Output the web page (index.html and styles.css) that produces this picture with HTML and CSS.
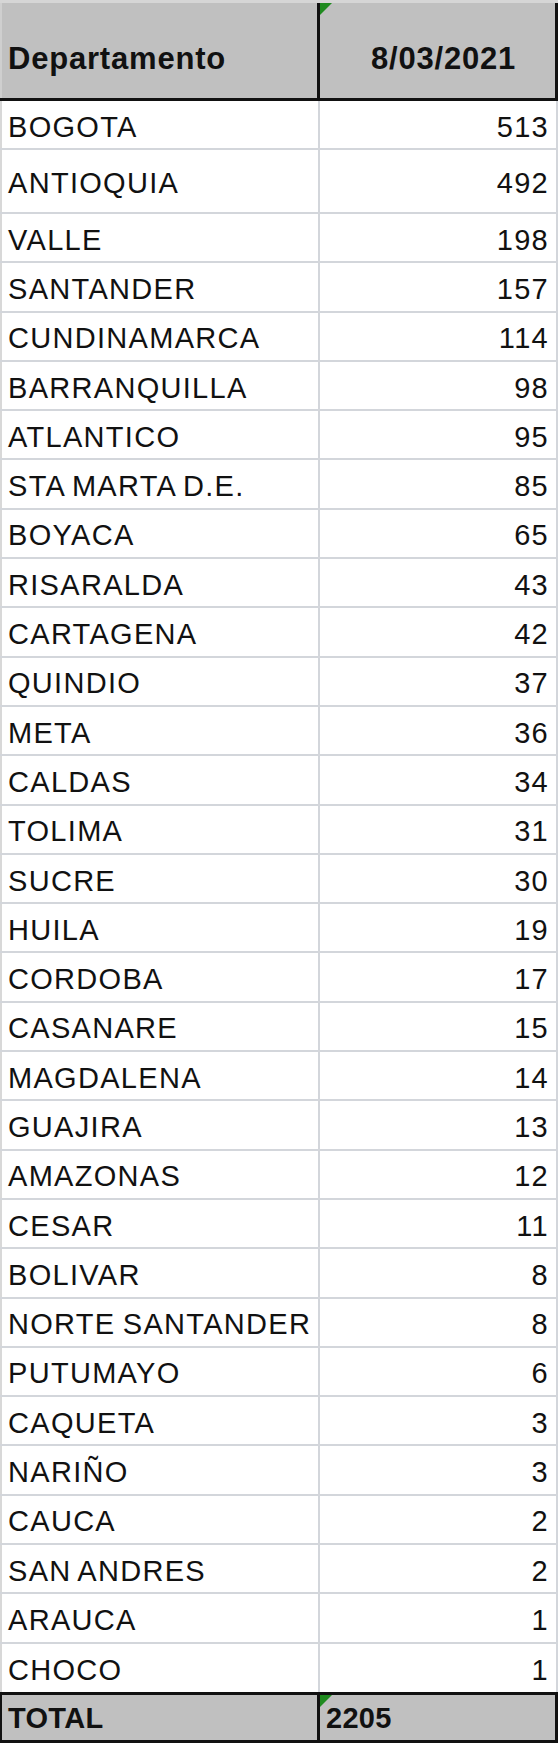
FILE: index.html
```html
<!DOCTYPE html>
<html lang="es">
<head>
<meta charset="utf-8">
<title>Departamento 8/03/2021</title>
<link rel="stylesheet" href="styles.css">
</head>
<body>
<div class="sheet">
  <div class="row head"><div class="cell name">Departamento</div><div class="cell date flag">8/03/2021</div></div>
  <div class="row first"><div class="cell name">BOGOTA</div><div class="cell num">513</div></div>
  <div class="row tall"><div class="cell name">ANTIOQUIA</div><div class="cell num">492</div></div>
  <div class="row"><div class="cell name">VALLE</div><div class="cell num">198</div></div>
  <div class="row"><div class="cell name">SANTANDER</div><div class="cell num">157</div></div>
  <div class="row"><div class="cell name">CUNDINAMARCA</div><div class="cell num">114</div></div>
  <div class="row"><div class="cell name">BARRANQUILLA</div><div class="cell num">98</div></div>
  <div class="row"><div class="cell name">ATLANTICO</div><div class="cell num">95</div></div>
  <div class="row"><div class="cell name">STA MARTA D.E.</div><div class="cell num">85</div></div>
  <div class="row"><div class="cell name">BOYACA</div><div class="cell num">65</div></div>
  <div class="row"><div class="cell name">RISARALDA</div><div class="cell num">43</div></div>
  <div class="row"><div class="cell name">CARTAGENA</div><div class="cell num">42</div></div>
  <div class="row"><div class="cell name">QUINDIO</div><div class="cell num">37</div></div>
  <div class="row"><div class="cell name">META</div><div class="cell num">36</div></div>
  <div class="row"><div class="cell name">CALDAS</div><div class="cell num">34</div></div>
  <div class="row"><div class="cell name">TOLIMA</div><div class="cell num">31</div></div>
  <div class="row"><div class="cell name">SUCRE</div><div class="cell num">30</div></div>
  <div class="row"><div class="cell name">HUILA</div><div class="cell num">19</div></div>
  <div class="row"><div class="cell name">CORDOBA</div><div class="cell num">17</div></div>
  <div class="row"><div class="cell name">CASANARE</div><div class="cell num">15</div></div>
  <div class="row"><div class="cell name">MAGDALENA</div><div class="cell num">14</div></div>
  <div class="row"><div class="cell name">GUAJIRA</div><div class="cell num">13</div></div>
  <div class="row"><div class="cell name">AMAZONAS</div><div class="cell num">12</div></div>
  <div class="row"><div class="cell name">CESAR</div><div class="cell num">11</div></div>
  <div class="row"><div class="cell name">BOLIVAR</div><div class="cell num">8</div></div>
  <div class="row"><div class="cell name">NORTE SANTANDER</div><div class="cell num">8</div></div>
  <div class="row"><div class="cell name">PUTUMAYO</div><div class="cell num">6</div></div>
  <div class="row"><div class="cell name">CAQUETA</div><div class="cell num">3</div></div>
  <div class="row"><div class="cell name">NARIÑO</div><div class="cell num">3</div></div>
  <div class="row"><div class="cell name">CAUCA</div><div class="cell num">2</div></div>
  <div class="row"><div class="cell name">SAN ANDRES</div><div class="cell num">2</div></div>
  <div class="row"><div class="cell name">ARAUCA</div><div class="cell num">1</div></div>
  <div class="row last"><div class="cell name">CHOCO</div><div class="cell num">1</div></div>
  <div class="row total"><div class="cell name">TOTAL</div><div class="cell sum flag">2205</div></div>
</div>
</body>
</html>
```

FILE: styles.css
```css
html, body {
  margin: 0;
  padding: 0;
  background: #ffffff;
}

.sheet {
  width: 558px;
  font-family: "Liberation Sans", Arial, sans-serif;
  color: #111111;
}

.row {
  display: grid;
  grid-template-columns: 320px 238px;
  height: 49.3px;
  box-sizing: border-box;
  border-bottom: 2px solid #d3d6db;
}

.row.first {
  height: 49px;
}

.row.tall {
  height: 64px;
}

.row.last {
  height: 48.3px;
  border-bottom: none;
}

.cell {
  display: flex;
  align-items: center;
  box-sizing: border-box;
  padding-top: 5px;
  font-size: 29px;
  letter-spacing: 1.3px;
  word-spacing: -2px;
  white-space: nowrap;
  border-right: 2px solid #d3d6db;
}

.cell.name {
  padding-left: 6px;
  border-left: 2px solid #d8d8d8;
}

.cell.num {
  justify-content: flex-end;
  padding-right: 7px;
}

/* header */
.row.head {
  height: 101px;
  background: #c0c0c0;
  border-top: 3px solid #d6d6d6;
  border-bottom: 3px solid #111111;
}

.row.head .cell {
  font-weight: bold;
  font-size: 31px;
  letter-spacing: 0.8px;
  padding-top: 17px;
  border-right: 3px solid #111111;
}

.row.head .cell.name {
  border-left: 2px solid #cfcfcf;
}

.cell.date {
  justify-content: center;
  padding-left: 12px;
}

/* total */
.row.total {
  height: 51px;
  background: #c0c0c0;
  border-top: 3px solid #111111;
  border-bottom: 3px solid #111111;
}

.row.total .cell {
  font-weight: bold;
  font-size: 29px;
  letter-spacing: 0.3px;
  padding-top: 3px;
  border-right: 3px solid #111111;
}

.row.total .cell.name {
  border-left: 2px solid #111111;
}

.cell.sum {
  padding-left: 6px;
}

/* Excel green error-indicator triangle */
.flag {
  position: relative;
}

.flag::before {
  content: "";
  position: absolute;
  left: 0;
  top: 0;
  border-top: 12px solid #1f8a1f;
  border-right: 12px solid transparent;
}
```
